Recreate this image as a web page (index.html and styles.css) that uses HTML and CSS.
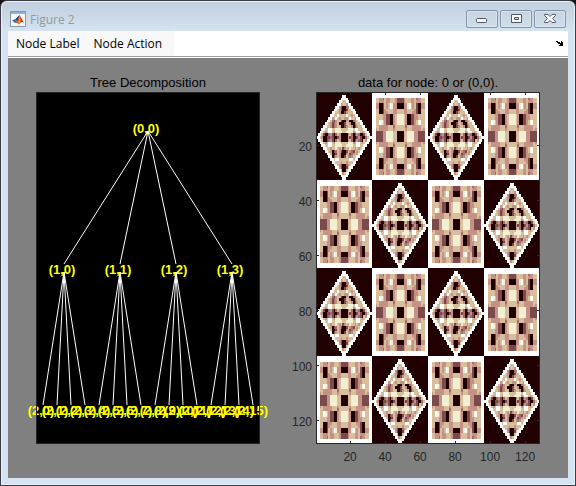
FILE: index.html
```
<!DOCTYPE html>
<html lang="en">
<head>
    <meta charset="UTF-8">
    <meta name="viewport" content="width=device-width, initial-scale=1.0">
    <title>Figure 2</title>
    <link rel="stylesheet" href="styles.css">
</head>
<body>
    <div class="window">
        <!-- Title bar -->
        <header class="titlebar">
            <svg class="app-icon" viewBox="0 0 16 16" width="16" height="16" aria-hidden="true">
                <rect x="0.5" y="0.5" width="15" height="15" fill="#f4f6f8" stroke="#8796a8"/>
                <rect x="1" y="1" width="14" height="2" fill="#8db4dc"/>
                <path d="M2 9.5 L5.5 8 L7.5 10 L5 12 Z" fill="#2f6fb0"/>
                <path d="M5.5 8 L8 5.5 L9.5 4 L8.5 8 L7.5 10 Z" fill="#1b3f72"/>
                <path d="M9.5 4 C11 5.5 12 9.5 14 11.5 C12 10.5 11 11 9 13.5 L7.5 12 L5 12 L7.5 10 Z" fill="#d9541e"/>
                <path d="M9.5 4 C10.5 6 10.5 9 9.5 13 L8 12.5 C9 10 9.5 7 9.5 4 Z" fill="#f5a02c"/>
                <path d="M10.5 6 C11.5 8 12.5 10.5 14 11.5 L12 11 Z" fill="#8c1d12"/>
            </svg>
            <h1 class="title">Figure 2</h1>
            <div class="controls">
                <button type="button" aria-label="Minimize">
                    <svg viewBox="0 0 14 12" width="14" height="12">
                        <rect x="1.5" y="5.5" width="10" height="4" rx="1" fill="#f6f8fa" stroke="#535666"/>
                    </svg>
                </button>
                <button type="button" aria-label="Maximize">
                    <svg viewBox="0 0 14 12" width="14" height="12">
                        <path d="M2.5 1.5 H12.5 V9.5 H2.5 Z M5.5 4.5 V6.5 H9.5 V4.5 Z" fill="#f6f8fa" fill-rule="evenodd" stroke="#535666"/>
                    </svg>
                </button>
                <button type="button" aria-label="Close">
                    <svg viewBox="0 0 14 12" width="14" height="12">
                        <path d="M1.5 1.5 H5 L7 3.5 L9 1.5 H12.5 V2.5 L9.5 5.5 L12.5 8.5 V9.5 H9 L7 7.5 L5 9.5 H1.5 V8.5 L4.5 5.5 L1.5 2.5 Z" fill="#f6f8fa" stroke="#535666"/>
                    </svg>
                </button>
            </div>
        </header>

        <!-- Menu bar -->
        <nav class="menubar">
            <div class="menus">
                <button type="button">Node Label</button>
                <button type="button">Node Action</button>
            </div>
            <button type="button" class="dock" aria-label="Dock figure">
                <svg viewBox="0 0 7 5" width="7" height="5">
                    <path d="M0 0 H2 V1 H4 V2 H5 V0 H6 V1 H7 V5 H3 V4 H4 V3 H2 V2 H1 V1 H0 Z" fill="#000"/>
                </svg>
            </button>
        </nav>

        <!-- Plots -->
        <main class="figure">
            <section class="axes">
                <h2>Tree Decomposition</h2>
                <svg id="tree" class="plot" viewBox="0 0 224 352">
                    <rect class="back" width="224" height="352"/>
                    <g id="labels" class="node-labels"></g>
                    <path id="links" class="links"/>
                    <rect class="frame" x="0.5" y="0.5" width="223" height="351"/>
                </svg>
            </section>
            <section class="axes">
                <h2>data for node: 0 or (0,0).</h2>
                <svg class="plot" viewBox="0 0 224 352">
                    <g id="image" class="image" transform="scale(1.75 2.75)"></g>
                    <rect class="frame" x="0.5" y="0.5" width="223" height="351"/>
                    <path id="ticks" class="ticks"/>
                    <g id="tick-labels" class="tick-labels"></g>
                </svg>
            </section>
        </main>
    </div>

    <script src="plots.js"></script>
</body>
</html>
```

FILE: styles.css
```
* {
    box-sizing: border-box;
}

body {
    margin: 0;
    background-color: #15151a;
    font-family: "Open Sans", "Noto Sans", sans-serif;
    font-size: 12px;
}

button {
    margin: 0;
    padding: 0;
    border: none;
    background: none;
    font: inherit;
    color: inherit;
}

.window {
    display: flex;
    flex-direction: column;
    min-height: 100vh;
    padding: 0 7px 7px;
    border: 1px solid #3c3c44;
    border-radius: 7px 7px 0 0;
    background: linear-gradient(#c0cedd, #d6e4f1 31px);
    box-shadow: inset 0 0 0 1px #e8f1f9;
}

/* Title bar */
.titlebar {
    display: flex;
    align-items: center;
    height: 30px;
    padding: 6px 2px 0;
}

.title {
    flex: 1;
    margin: 0 0 0 4px;
    font-size: 12px;
    font-weight: normal;
    color: #93999f;
}

.controls {
    display: flex;
    gap: 2px;
}

.controls button {
    display: flex;
    align-items: center;
    justify-content: center;
    width: 32px;
    height: 18px;
    border: 1px solid #8592ab;
    border-radius: 2px;
    background: linear-gradient(#c6d3e1, #d0ddea);
    box-shadow: inset 0 0 0 1px #d8e4f0;
}

/* Menu bar */
.menubar {
    display: flex;
    align-items: center;
    justify-content: space-between;
    height: 26px;
    padding-right: 5px;
    border-bottom: 1px solid #a0a0a0;
    background-color: #fff;
    color: #000;
}

.menus {
    display: flex;
    gap: 14px;
    height: 100%;
    padding: 0 12px 0 8px;
    background-color: #f8f8f8;
}

.dock {
    display: flex;
}

/* Plots */
.figure {
    display: grid;
    grid-template-columns: 1fr 1fr;
    gap: 56px;
    flex: 1;
    padding: 16px 28px 34px;
    border-top: 1px solid #fff;
    background-color: #808080;
    font-family: "Liberation Sans", Arial, sans-serif;
}

.axes h2 {
    margin: 0;
    font-size: 13px;
    font-weight: normal;
    line-height: 18px;
    text-align: center;
    white-space: nowrap;
    color: #000;
}

.plot {
    display: block;
    width: 100%;
    overflow: visible;
}

.back {
    fill: #000;
}

.frame {
    fill: none;
    stroke: #262626;
}

.links {
    fill: none;
    stroke: #fff;
    stroke-width: 1;
}

.node-labels {
    font-size: 13px;
    font-weight: bold;
    text-anchor: middle;
    fill: #ff0;
}

.image {
    shape-rendering: crispEdges;
}

.ticks {
    fill: none;
    stroke: #262626;
    shape-rendering: crispEdges;
}

.tick-labels {
    font-size: 12px;
    fill: #262626;
}
```

FILE: plots.js
```
const SVG = 'http://www.w3.org/2000/svg';

function add(parent, name, attrs, text) {
    const el = document.createElementNS(SVG, name);
    for (const key in attrs) el.setAttribute(key, attrs[key]);
    if (text !== undefined) el.textContent = text;
    parent.appendChild(el);
}

// Tree: one root, 4 nodes, 16 leaves
const labels = document.getElementById('labels');
let links = '';
add(labels, 'text', { x: 110, y: 41 }, '(0,0)');
for (let i = 0; i < 4; i++) {
    const x = 28 + 56 * i;
    add(labels, 'text', { x: x - 2, y: 182 }, `(1,${i})`);
    links += `M112 39 L${x} 172 `;
    for (let j = 0; j < 4; j++) {
        const leaf = x - 21 + 14 * j;
        add(labels, 'text', { x: leaf - 2, y: 323 }, `(2,${4 * i + j})`);
        links += `M${x} 180 L${leaf} 313 `;
    }
}
document.getElementById('links').setAttribute('d', links);

// Colormap
const colors = {
    k: '#200000', b: '#7b4b4b', m: '#a56a6a', p: '#c69186',
    t: '#d8be9b', c: '#f1f0d5', w: '#ffffff'
};

// Upper left quarter of the block tile, mirrored both ways
const block = [
    'ttppmtpptttpbb', 'ttppptpptttpbb', 'ppkkbtptwcppkk', 'ppkkbtptwcppkk',
    'ttkkbpttttpptt', 'ttkkbpptttpptt', 'ttttppbbkkptcc', 'ttttppbbkkptcc',
    'ttwctpbbkkptcc', 'ttwctpbbkkptcc', 'ttppppptttmttt', 'ptppppptttpttt',
    'bbbbppccccttkk', 'bbbbppccccttkk'
];

// Inside of the diamond tile, row by row
const diamond = [
    'tt',
    'pttp',
    'pbkkmp',
    'tpbkkbtt',
    'ttpkkbpttt',
    'ttwttttwttpt',
    'ptwtpttpptwttp',
    'tmbpttbkkptkkmpt',
    'tpbmptkkkbttpkkmtt',
    'ttpbmpttkkbpttpkbptt',
    'ttwwttcccttttccctwwttt',
    'tptwwtpccccttccccptwwtpt',
    'tbkkmpbkmtpkkkkptmkbpmkkbt',
    'tpkkbbmbkkbpkkkkpbmkkbpbkkmt',
    'tkkbmpbkmtpkkkkptmkbpmbktp',
    'tptwwtpcccttttcccptwwtpt',
    'ttwwttccccttccccttwwtt',
    'ttpttctptbptpcttptpt',
    'tpkbmtpbkkbtpmbtpt',
    'tkkbtpkkkptbmptp',
    'kbptpkkbtpmptt',
    'twwttttttwwt',
    'tttpttpttt',
    'tpbkkmpt',
    'pbkkbt',
    'tkkt',
    'pt'
];

function blockCell(r, c) {
    if (r < 2 || r > 29 || c < 2 || c > 29) return 'w';
    return block[Math.min(r, 31 - r) - 2][Math.min(c, 31 - c) - 2];
}

function diamondCell(r, c) {
    const half = 15 - Math.abs(16 - r);
    const left = 15 - half;
    if (half < 0 || c < left || c > 31 - left) return 'k';
    if (c < left + 2 || c > 29 - left) return 'w';
    return diamond[r - 3][c - left - 2];
}

// 4 x 4 checkerboard, equal neighbours are drawn as one run
const image = document.getElementById('image');
for (let y = 0; y < 128; y++) {
    const row = [];
    for (let x = 0; x < 128; x++) {
        const odd = ((x >> 5) + (y >> 5)) % 2;
        row.push((odd ? blockCell : diamondCell)(y % 32, x % 32));
    }
    for (let x = 0, end; x < 128; x = end) {
        end = x + 1;
        while (end < 128 && row[end] === row[x]) end++;
        add(image, 'rect', { x: x, y: y, width: end - x, height: 1, fill: colors[row[x]] });
    }
}

// Ticks every 20 cells
const tickLabels = document.getElementById('tick-labels');
let ticks = '';
for (let v = 20; v <= 120; v += 20) {
    const x = (v - 0.5) * 1.75;
    const y = (v - 0.5) * 2.75;
    ticks += `M${x} 0 v3 M${x} 352 v-3 M0 ${y} h3 M224 ${y} h-3 `;
    add(tickLabels, 'text', { x: x, y: 369, 'text-anchor': 'middle' }, v);
    add(tickLabels, 'text', { x: -4, y: y + 5, 'text-anchor': 'end' }, v);
}
document.getElementById('ticks').setAttribute('d', ticks);
```
